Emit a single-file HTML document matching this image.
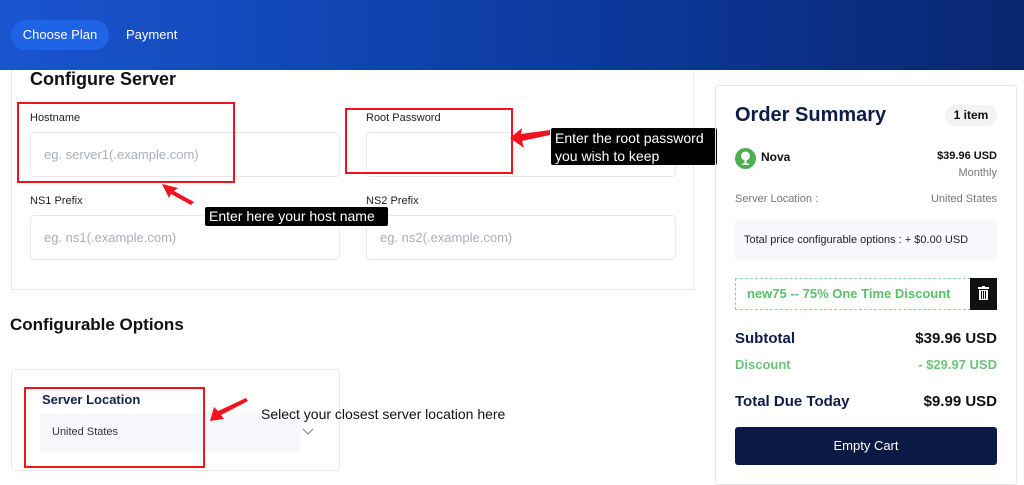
<!DOCTYPE html>
<html><head><style>
*{box-sizing:border-box;margin:0;padding:0}
body{width:1024px;height:474px;overflow:hidden;background:#fff;font-family:"Liberation Sans",sans-serif;position:relative;color:#111}
.a{position:absolute}
.hdr{left:0;top:0;width:1024px;height:70px;background:linear-gradient(90deg,#1a55d0 0%,#0c3aa0 55%,#0a2670 100%)}
.inp{position:absolute;border:1px solid #e8eaef;border-radius:4px;background:#fff;color:#a9afb8;font-size:13px;padding-left:13px;line-height:44px}
.lbl{position:absolute;font-size:11px;color:#222}
.red{position:absolute;border:2px solid #f0141e}
.tip{position:absolute;background:#000;color:#fff;font-size:14px;border-radius:2px;padding:1px 4px;line-height:18px}
.r{position:absolute;right:27px;text-align:right}
</style></head><body>
<div class="a hdr"></div>
<div class="a" style="left:11px;top:20px;width:98px;height:30px;border-radius:15px;background:#1f64e6;color:#fff;font-size:13px;line-height:30px;text-align:center">Choose Plan</div>
<div class="a" style="left:126px;top:20px;color:#fff;font-size:13px;line-height:30px">Payment</div>

<div class="a" style="left:11px;top:70px;width:683px;height:220px;border:1px solid #e6e8ec;border-top:none"></div>
<div class="a" style="left:30px;top:68px;font-size:18px;font-weight:bold;line-height:22px">Configure Server</div>
<div class="lbl" style="left:30px;top:112px">Hostname</div>
<div class="lbl" style="left:366px;top:112px">Root Password</div>
<div class="inp" style="left:30px;top:132px;width:310px;height:45px">eg. server1(.example.com)</div>
<div class="inp" style="left:366px;top:132px;width:310px;height:45px"></div>
<div class="lbl" style="left:30px;top:195px">NS1 Prefix</div>
<div class="lbl" style="left:366px;top:195px">NS2 Prefix</div>
<div class="inp" style="left:30px;top:215px;width:310px;height:45px">eg. ns1(.example.com)</div>
<div class="inp" style="left:366px;top:215px;width:310px;height:45px">eg. ns2(.example.com)</div>
<div class="red" style="left:17px;top:102px;width:218px;height:81px"></div>
<div class="red" style="left:345px;top:108px;width:168px;height:66px"></div>
<svg class="a" style="left:160px;top:182px" width="40" height="24"><polygon points="2,2 18,6 14,9 34,20 31,23 11,12 9,16" fill="#f0141e"/></svg>
<svg class="a" style="left:508px;top:126px" width="44" height="24"><polygon points="2,12 14,2 13,8 42,4 42,9 14,15 16,22" fill="#f0141e"/></svg>
<div class="tip" style="left:551px;top:128px;width:166px;height:37px">Enter the root password you wish to keep</div>
<div class="tip" style="left:205px;top:207px;width:183px;height:19px;line-height:17px">Enter here your host name</div>

<div class="a" style="left:10px;top:315px;font-size:17px;font-weight:bold">Configurable Options</div>
<div class="a" style="left:11px;top:369px;width:329px;height:102px;border:1px solid #e6e8ec;border-radius:3px"></div>
<div class="a" style="left:42px;top:392px;font-size:13px;font-weight:bold;color:#17214a">Server Location</div>
<div class="a" style="left:40px;top:413px;width:260px;height:39px;background:#f6f8fc;font-size:11px;line-height:39px;padding-left:12px;color:#333">United States</div>
<svg class="a" style="left:302px;top:428px" width="12" height="8"><polyline points="1,1 6,6 11,1" fill="none" stroke="#888" stroke-width="1.2"/></svg>
<div class="red" style="left:24px;top:387px;width:181px;height:81px"></div>
<svg class="a" style="left:208px;top:397px" width="42" height="28"><polygon points="2,24 6,10 10,14 38,1 40,4 13,18 16,22" fill="#f0141e"/></svg>
<div class="a" style="left:261px;top:406px;font-size:14px;color:#111">Select your closest server location here</div>

<div class="a" style="left:715px;top:85px;width:302px;height:400px;border:1px solid #e3e5ea;border-radius:3px"></div>
<div class="a" style="left:735px;top:104px;font-size:20px;font-weight:bold;color:#0f1b4a">Order Summary</div>
<div class="a" style="left:945px;top:105px;width:52px;height:21px;border-radius:11px;background:#f2f3f5;font-size:12px;font-weight:bold;text-align:center;line-height:21px">1 item</div>
<svg class="a" style="left:735px;top:148px" width="21" height="21"><circle cx="10.5" cy="10.5" r="10.5" fill="#4caf50"/><circle cx="10.5" cy="8" r="4.5" fill="#fff"/><rect x="9.5" y="11" width="2" height="5" fill="#fff"/><rect x="7" y="15.5" width="7" height="1.5" fill="#fff"/></svg>
<div class="a" style="left:761px;top:150px;font-size:12px;font-weight:bold;color:#111">Nova</div>
<div class="r" style="top:150px;font-size:11px;font-weight:bold">$39.96 USD</div>
<div class="r" style="top:167px;font-size:11px;color:#777">Monthly</div>
<div class="a" style="left:735px;top:193px;font-size:11px;color:#777">Server Location :</div>
<div class="r" style="top:193px;font-size:11px;color:#777">United States</div>
<div class="a" style="left:735px;top:220px;width:262px;height:40px;background:#f6f8fc;font-size:11px;line-height:40px;padding-left:9px;color:#222">Total price configurable options : + $0.00 USD</div>
<div class="a" style="left:735px;top:278px;width:236px;height:32px;border:1px dashed #8fd49a;font-size:13px;font-weight:bold;color:#5cbf6a;line-height:30px;padding-left:11px">new75 -- 75% One Time Discount</div>
<div class="a" style="left:970px;top:278px;width:27px;height:32px;background:#111"></div>
<svg class="a" style="left:977px;top:286px" width="13" height="15"><rect x="1" y="1" width="11" height="2" fill="#fff"/><rect x="5" y="0" width="3" height="2" fill="#fff"/><rect x="2" y="4" width="9" height="10" fill="#fff"/><rect x="4" y="5" width="1" height="8" fill="#111"/><rect x="6" y="5" width="1" height="8" fill="#111"/><rect x="8" y="5" width="1" height="8" fill="#111"/></svg>
<div class="a" style="left:735px;top:330px;font-size:15px;font-weight:bold;color:#0f1b4a">Subtotal</div>
<div class="r" style="top:330px;font-size:15px;font-weight:bold">$39.96 USD</div>
<div class="a" style="left:735px;top:357px;font-size:13px;font-weight:bold;color:#6cc47a">Discount</div>
<div class="r" style="top:357px;font-size:13px;font-weight:bold;color:#6cc47a">- $29.97 USD</div>
<div class="a" style="left:735px;top:393px;font-size:15px;font-weight:bold;color:#0f1b4a">Total Due Today</div>
<div class="r" style="top:393px;font-size:15px;font-weight:bold">$9.99 USD</div>
<div class="a" style="left:735px;top:427px;width:262px;height:38px;background:#0b1a45;border-radius:3px;color:#fff;font-size:13px;text-align:center;line-height:38px">Empty Cart</div>
</body></html>
